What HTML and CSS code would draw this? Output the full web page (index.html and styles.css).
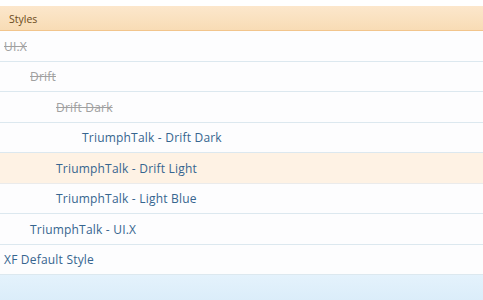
FILE: index.html
```html
<!DOCTYPE html>
<html lang="en">
<head>
    <meta charset="UTF-8">
    <meta name="viewport" content="width=device-width, initial-scale=1.0">
    <title>Styles</title>
    <link rel="stylesheet" href="styles.css">
</head>
<body>
    <div class="panel">
        <div class="panel-header">Styles</div>
        <ol class="style-list">
            <li class="style-row depth-0 disabled"><span>UI.X</span></li>
            <li class="style-row depth-1 disabled"><span>Drift</span></li>
            <li class="style-row depth-2 disabled"><span>Drift Dark</span></li>
            <li class="style-row depth-3"><span>TriumphTalk - Drift Dark</span></li>
            <li class="style-row depth-2 selected"><span>TriumphTalk - Drift Light</span></li>
            <li class="style-row depth-2"><span>TriumphTalk - Light Blue</span></li>
            <li class="style-row depth-1"><span>TriumphTalk - UI.X</span></li>
            <li class="style-row depth-0"><span>XF Default Style</span></li>
        </ol>
        <div class="panel-footer"></div>
    </div>
</body>
</html>
```

FILE: styles.css
```css
body {
    margin: 0;
    padding: 0;
    background-color: #ffffff;
    font-family: "Open Sans", "Liberation Sans", sans-serif;
    overflow: hidden;
}
.panel {
    padding-top: 6px;
}
.panel-header {
    height: 25px;
    box-sizing: border-box;
    padding-left: 9px;
    padding-top: 1px;
    display: flex;
    align-items: center;
    font-size: 10.5px;
    color: #6b4a20;
    background: linear-gradient(to bottom, #fce7cc, #f8dcb5);
    border-bottom: 1px solid #f2c58c;
}
.style-list {
    list-style: none;
    margin: 0;
    padding: 0;
}
.style-row {
    height: 30.5px;
    box-sizing: border-box;
    display: flex;
    align-items: center;
    padding-top: 1px;
    font-size: 12px;
    letter-spacing: 0.2px;
    color: #36658f;
    background-color: #fdfdfe;
    border-bottom: 1px solid #dce8ef;
}
.style-row.selected {
    background-color: #fef2e4;
    border-bottom-color: #ebebeb;
}
.style-row.disabled {
    color: #a0a0a0;
    text-decoration: line-through;
}
.depth-0 { padding-left: 4px; }
.depth-1 { padding-left: 30px; }
.depth-2 { padding-left: 56px; }
.depth-3 { padding-left: 82px; }
.panel-footer {
    height: 30px;
    background: linear-gradient(to bottom, #e4f2fc, #d9ecf9);
}
```
